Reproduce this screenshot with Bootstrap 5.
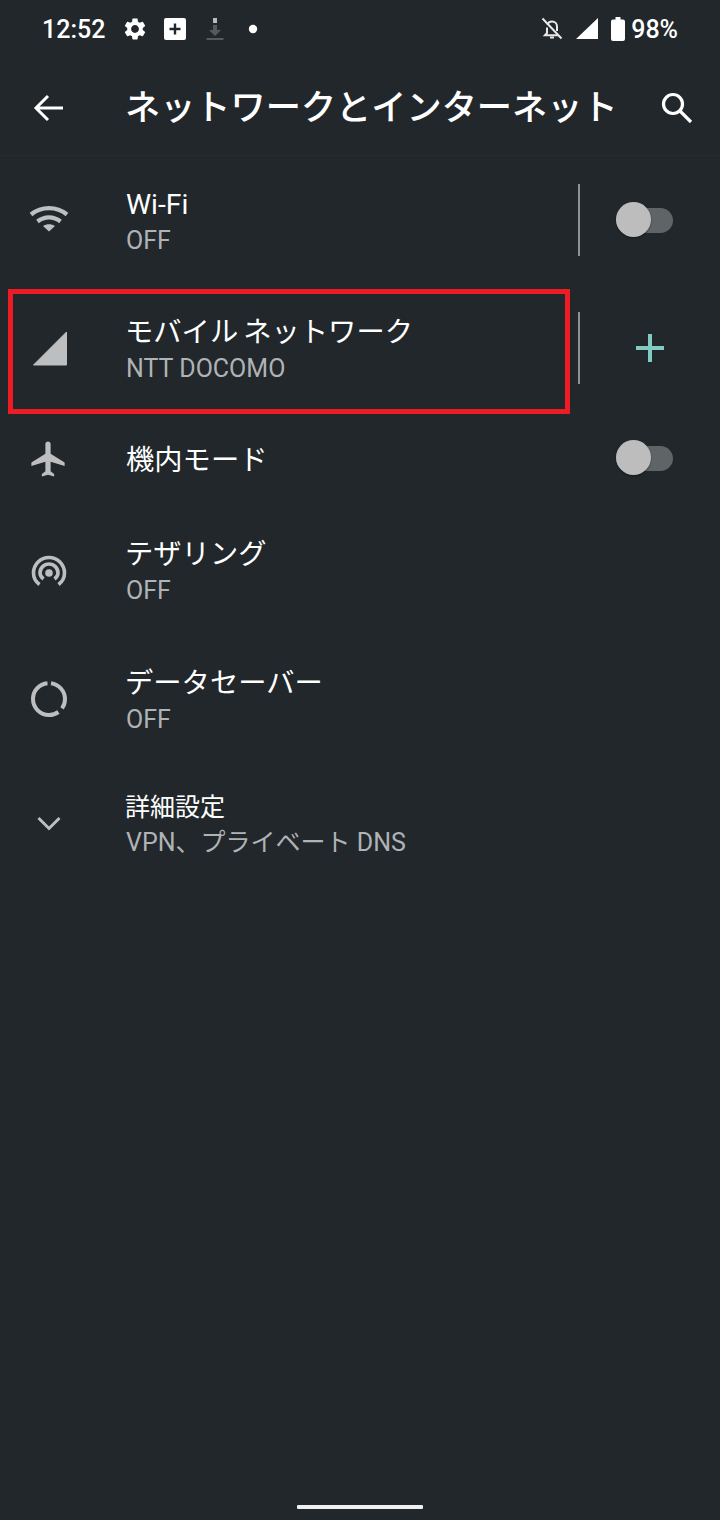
<!DOCTYPE html>
<html lang="ja">
  <head>
    <meta charset="utf-8">
    <title>ネットワークとインターネット</title>
    <link href="https://cdn.jsdelivr.net/npm/bootstrap@5.3.3/dist/css/bootstrap.min.css" rel="stylesheet">
    <style>
      body {
        background: #21272b;
        color: #fff;
        font-family: Roboto, "Noto Sans CJK JP", sans-serif;
      }

      .screen {
        height: 1520px;
        width: 720px;
        overflow: hidden;
      }

      /* Status bar */
      .status-bar {
        height: 60px;
        padding: 0 42px 0 42px;
        font-size: 25px;
        font-weight: 500;
        line-height: 60px;
      }

      .status-bar svg {
        display: block;
        margin-top: -2px;
      }

      .clock { width: 80px; }
      .status-gap-box { margin-left: 15px; }
      .status-gap-dl { margin-left: 18px; }
      .status-gap-dot { margin-left: 23px; }
      .status-gap-signal { margin-left: 11px; }
      .status-gap-battery { margin-left: 12px; }
      .status-gap-level { margin-left: 6px; }

      /* Title bar */
      .title-bar {
        height: 96px;
        border-bottom: 1px solid #252b2f;
      }

      .title-icon {
        width: 126px;
        padding-left: 31px;
      }

      .page-title {
        font-size: 35.2px;
        font-weight: 500;
        line-height: 96px;
        margin: 0 0 0 -1px;
        white-space: nowrap;
      }

      .search-btn { margin-left: 41px; }

      /* Settings rows */
      .setting-row { position: relative; }
      .row-wifi, .row-mobile { height: 128px; }
      .row-plane { height: 94px; }
      .row-tether { height: 128px; }
      .row-saver { height: 130px; }
      .row-more { height: 120px; }

      .row-icon {
        width: 126px;
        flex: none;
        padding-left: 25px;
      }

      .row-icon svg { display: block; }
      .plane-icon { margin-left: 2px; }
      .wifi-icon { margin-top: 4px; }

      .row-text { padding-top: 5px; }
      .row-saver .row-text { padding-top: 4px; }
      .row-plane .row-text { padding-top: 2px; }
      .row-more .row-text { padding-top: 1px; }

      .row-title {
        font-size: 28.3px;
        line-height: 37px;
        color: #fff;
        margin-left: -1px;
        word-spacing: -2px;
      }

      .row-latin, .row-plane .row-title { margin-left: 0; }

      .row-sub {
        font-size: 25px;
        line-height: 36px;
        color: #b0b3b6;
      }

      .row-more .row-title {
        font-size: 25px;
        line-height: 36px;
      }

      .row-more .row-sub { line-height: 34px; }

      .row-divider {
        position: absolute;
        left: 578px;
        top: 28px;
        width: 2px;
        height: 72px;
        background: #8f9295;
      }

      .row-end {
        position: absolute;
        left: 580px;
        right: 0;
        top: 0;
        bottom: 0;
      }

      .row-plane .toggle-track { margin-top: -13px; }

      .toggle-track {
        position: absolute;
        left: 36px;
        top: 50%;
        width: 57px;
        height: 25px;
        margin-top: -12px;
        background: #5f6467;
        border-radius: 13px;
      }

      .toggle-thumb {
        position: absolute;
        left: 0;
        top: -6px;
        width: 35px;
        height: 35px;
        background: #bdbdbd;
        border-radius: 50%;
        box-shadow: 0 1px 2px rgba(0, 0, 0, .4);
      }

      .add-icon {
        position: absolute;
        left: 56px;
        top: 50px;
      }

      .highlight-box {
        position: absolute;
        left: 8px;
        top: 5px;
        width: 562px;
        height: 125px;
        border: 5px solid #ed1c24;
        pointer-events: none;
      }

      .home-bar {
        position: absolute;
        left: 297px;
        top: 1505px;
        width: 126px;
        height: 4px;
        background: #f0f0f0;
        border-radius: 1px;
      }
    </style>
    <script src="https://cdn.jsdelivr.net/npm/bootstrap@5.3.3/dist/js/bootstrap.bundle.min.js"></script>
  </head>
  <body>
    <div class="screen">
      <!-- Status bar -->
      <div class="status-bar d-flex align-items-center">
        <span class="clock">12:52</span>
        <div class="d-flex align-items-center">
          <svg width="26" height="26" viewBox="0 0 24 24" fill="#fff"><path d="M19.14 12.94c.04-.3.06-.61.06-.94 0-.32-.02-.64-.07-.94l2.03-1.58c.18-.14.23-.41.12-.61l-1.92-3.32c-.12-.22-.37-.29-.59-.22l-2.39.96c-.5-.38-1.03-.7-1.62-.94l-.36-2.54c-.04-.24-.24-.41-.48-.41h-3.84c-.24 0-.43.17-.47.41l-.36 2.54c-.59.24-1.13.57-1.62.94l-2.39-.96c-.22-.08-.47 0-.59.22L2.74 8.87c-.12.21-.08.47.12.61l2.03 1.58c-.05.3-.09.63-.09.94s.02.64.07.94l-2.03 1.58c-.18.14-.23.41-.12.61l1.92 3.32c.12.22.37.29.59.22l2.39-.96c.5.38 1.03.7 1.62.94l.36 2.54c.05.24.24.41.48.41h3.84c.24 0 .44-.17.47-.41l.36-2.54c.59-.24 1.13-.56 1.62-.94l2.39.96c.22.08.47 0 .59-.22l1.92-3.32c.12-.22.07-.47-.12-.61l-2.01-1.58zM12 15.6c-1.98 0-3.6-1.62-3.6-3.6s1.62-3.6 3.6-3.6 3.6 1.62 3.6 3.6-1.62 3.6-3.6 3.6z"/></svg>
          <svg class="status-gap-box" width="24" height="24" viewBox="0 0 24 24"><rect x="1" y="1" width="22" height="22" rx="2" fill="#fff"/><path d="M12 6.500v11M6.500 12h11" stroke="#21272b" stroke-width="2.400"/></svg>
          <svg class="status-gap-dl" width="20" height="24" viewBox="0 0 20 24"><rect x="8" y="1" width="4" height="5" fill="#b8babb"/><path d="M8 8h4v5h4l-6 6-6-6h4z" fill="#565a5e"/><rect x="1.500" y="21" width="17" height="2" fill="#565a5e"/></svg>
          <svg class="status-gap-dot" width="10" height="10" viewBox="0 0 10 10"><circle cx="5" cy="5" r="4.200" fill="#fff"/></svg>
        </div>
        <div class="ms-auto d-flex align-items-center">
          <svg width="24" height="24" viewBox="0 0 24 24" fill="none" stroke="#e8e8e8" stroke-width="2"><path d="M7.500 7.800C8 5.800 9.700 4.400 12 4.400c3 0 5 2.300 5 5.200v4.500"/><path d="M7 10.500V16l-2 2.200h13"/><path d="M10 20.500h4"/><path d="M2.500 1.500l19 20"/></svg>
          <svg class="status-gap-signal" width="24" height="24" viewBox="0 0 24 24"><path d="M1 22 23 1v21z" fill="#fff"/></svg>
          <svg class="status-gap-battery" width="14" height="24" viewBox="0 0 14 24"><path d="M4.500 0h5v2.500H12a2 2 0 0 1 2 2V22a2 2 0 0 1-2 2H2a2 2 0 0 1-2-2V4.500a2 2 0 0 1 2-2h2.500z" fill="#fff"/></svg>
          <span class="status-gap-level">98%</span>
        </div>
      </div>

      <!-- Title bar -->
      <div class="title-bar d-flex align-items-center">
        <div class="title-icon">
          <svg class="d-block" width="36" height="36" viewBox="0 0 36 36" fill="none" stroke="#fff" stroke-width="3"><path d="M32 18H6M17 6 5 18l12 12"/></svg>
        </div>
        <h1 class="page-title">ネットワークとインターネット</h1>
        <svg class="search-btn" width="36" height="36" viewBox="0 0 36 36" fill="none" stroke="#fff" stroke-width="3.200"><circle cx="14" cy="14" r="9.500"/><path d="m21 21 11 11"/></svg>
      </div>

      <!-- Wi-Fi -->
      <div class="setting-row row-wifi d-flex align-items-center">
        <div class="row-icon">
          <svg class="wifi-icon" width="48" height="48" viewBox="0 0 48 48" fill="none" stroke="#bdbfc1" stroke-width="4.200"><path d="M6 16.500c10.500-8.500 25.500-8.500 36 0"/><path d="M12.500 23.500c7-5.500 16-5.500 23 0"/><path d="M24 33.500 18 28c3.500-2.300 8.500-2.300 12 0z" fill="#bdbfc1" stroke="none"/></svg>
        </div>
        <div class="row-text">
          <div class="row-title row-latin">Wi-Fi</div>
          <div class="row-sub">OFF</div>
        </div>
        <div class="row-divider"></div>
        <div class="row-end"><div class="toggle-track"><div class="toggle-thumb"></div></div></div>
      </div>

      <!-- Mobile network -->
      <div class="setting-row row-mobile d-flex align-items-center">
        <div class="row-icon">
          <svg width="48" height="48" viewBox="0 0 48 48"><path d="M8.500 41 41.500 8V41z" fill="#bcbec0" stroke="#bcbec0" stroke-linejoin="round"/></svg>
        </div>
        <div class="row-text">
          <div class="row-title">モバイル ネットワーク</div>
          <div class="row-sub">NTT DOCOMO</div>
        </div>
        <div class="row-divider"></div>
        <div class="row-end">
          <svg class="add-icon" width="28" height="28" viewBox="0 0 28 28" stroke="#80cbc4" stroke-width="4"><path d="M14 0v28M0 14h28"/></svg>
        </div>
        <div class="highlight-box"></div>
      </div>

      <!-- Airplane mode -->
      <div class="setting-row row-plane d-flex align-items-center">
        <div class="row-icon">
          <svg class="plane-icon" width="42" height="42" viewBox="0 0 24 24" fill="#bcbec0"><path d="M21 16v-2l-8-5V3.500C13 2.670 12.330 2 11.500 2S10 2.670 10 3.500V9l-8 5v2l8-2.500V19l-2 1.500V22l3.500-1 3.500 1v-1.500L13 19v-5.500l8 2.500z" transform="translate(.5 0)"/></svg>
        </div>
        <div class="row-text">
          <div class="row-title">機内モード</div>
        </div>
        <div class="row-end"><div class="toggle-track"><div class="toggle-thumb"></div></div></div>
      </div>

      <!-- Tethering -->
      <div class="setting-row row-tether d-flex align-items-center">
        <div class="row-icon">
          <svg width="48" height="48" viewBox="0 0 48 48" fill="none" stroke="#bcbec0" stroke-width="3.600"><path d="M14.500 38.500C10.500 35.500 8.500 31 8.500 27c0-8.500 7-15.500 15.500-15.500S39.500 18.500 39.500 27c0 4-2 8.500-6 11.500"/><path d="M18.500 33c-2-1.500-3.500-3.500-3.500-6 0-5 4-9 9-9s9 4 9 9c0 2.500-1.500 4.500-3.500 6"/><circle cx="24" cy="27" r="3.800" fill="#bcbec0" stroke="none"/></svg>
        </div>
        <div class="row-text">
          <div class="row-title">テザリング</div>
          <div class="row-sub">OFF</div>
        </div>
      </div>

      <!-- Data saver -->
      <div class="setting-row row-saver d-flex align-items-center">
        <div class="row-icon">
          <svg width="48" height="48" viewBox="0 0 48 48" fill="none" stroke="#bcbec0" stroke-width="4"><path d="M22.500 8.200C14 9 8 15.800 8 24c0 8.800 7.200 16 16 16 3.500 0 6.700-1.100 9.400-3"/><path d="M26 8.200c7.800 1 14 7.800 14 15.800 0 3.600-1 6.700-3 9.400"/></svg>
        </div>
        <div class="row-text">
          <div class="row-title">データセーバー</div>
          <div class="row-sub">OFF</div>
        </div>
      </div>

      <!-- Advanced -->
      <div class="setting-row row-more d-flex align-items-center">
        <div class="row-icon">
          <svg width="48" height="48" viewBox="0 0 48 48" fill="none" stroke="#bcbec0" stroke-width="3"><path d="m13.500 18 10.500 10.500L34.500 18"/></svg>
        </div>
        <div class="row-text">
          <div class="row-title">詳細設定</div>
          <div class="row-sub">VPN、プライベート DNS</div>
        </div>
      </div>

      <div class="home-bar"></div>
    </div>
  </body>
</html>
